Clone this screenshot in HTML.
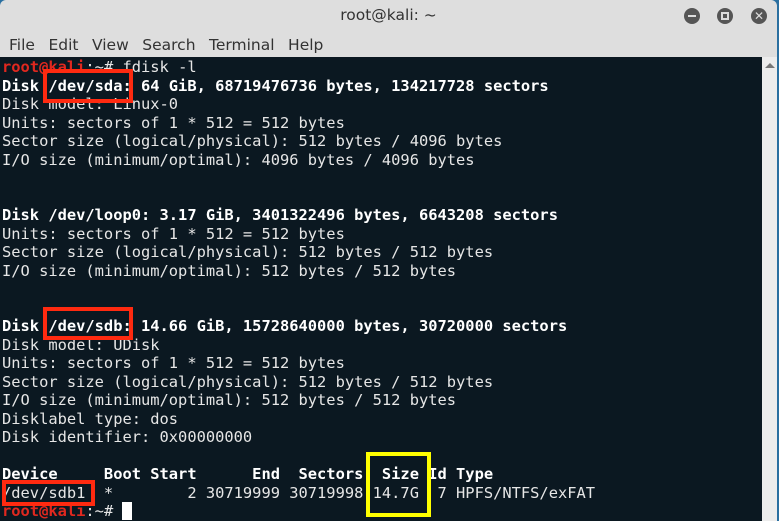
<!DOCTYPE html>
<html><head><meta charset="utf-8"><style>
*{margin:0;padding:0;box-sizing:border-box}
body{width:779px;height:521px;overflow:hidden;background:#2a6fa0;position:relative;font-family:"DejaVu Sans","Liberation Sans",sans-serif}
.win{position:absolute;left:0;top:0;width:777px;height:521px;background:#dedede;border-radius:6px 6px 0 0}
.title{position:absolute;top:6px;left:0;width:777px;text-align:center;font-size:15.5px;color:#333}
.menu{position:absolute;top:36px;left:9px;font-size:15.5px;color:#333}
.menu span{margin-right:13.5px}
.btn{position:absolute;top:8px;width:16px;height:16px;border-radius:50%;background:#555}
.term{position:absolute;left:0;top:57px;width:762px;height:464px;background:#0b1821;overflow:hidden}
.sb{position:absolute;left:762px;top:57px;width:15px;height:464px;background:#ececec}
pre{position:absolute;left:2px;top:1px;font-family:"DejaVu Sans Mono",monospace;font-size:15.4px;line-height:18.5px;color:#e6e6e6}
b{font-weight:bold;color:#fff}
.r{color:#e0281f;font-weight:bold}
.box{position:absolute;border:4px solid #ff2a10}
.y{position:absolute;border:4px solid #ffff00}
</style></head><body>
<div class="win">
<div class="title">root@kali: ~</div>
<div class="btn" style="left:684px"><div style="position:absolute;left:4px;top:7px;width:8px;height:2px;background:#ddd"></div></div>
<div class="btn" style="left:717px"><div style="position:absolute;left:4px;top:4px;width:8px;height:8px;border:2px solid #ddd"></div></div>
<div class="btn" style="left:751px;color:#ddd;font-size:12px;line-height:16px;text-align:center;font-weight:bold">✕</div>
<div class="menu"><span>File</span><span>Edit</span><span>View</span><span>Search</span><span>Terminal</span><span>Help</span></div>
</div>
<div class="term"><pre><span class="r">root@kali</span>:~# fdisk -l
<b>Disk /dev/sda: 64 GiB, 68719476736 bytes, 134217728 sectors</b>
Disk model: Linux-0
Units: sectors of 1 * 512 = 512 bytes
Sector size (logical/physical): 512 bytes / 4096 bytes
I/O size (minimum/optimal): 4096 bytes / 4096 bytes


<b>Disk /dev/loop0: 3.17 GiB, 3401322496 bytes, 6643208 sectors</b>
Units: sectors of 1 * 512 = 512 bytes
Sector size (logical/physical): 512 bytes / 512 bytes
I/O size (minimum/optimal): 512 bytes / 512 bytes


<b>Disk /dev/sdb: 14.66 GiB, 15728640000 bytes, 30720000 sectors</b>
Disk model: UDisk
Units: sectors of 1 * 512 = 512 bytes
Sector size (logical/physical): 512 bytes / 512 bytes
I/O size (minimum/optimal): 512 bytes / 512 bytes
Disklabel type: dos
Disk identifier: 0x00000000

<b>Device     Boot Start      End  Sectors  Size Id Type</b>
/dev/sdb1  *        2 30719999 30719998 14.7G  7 HPFS/NTFS/exFAT
<span class="r">root@kali</span>:~# <span style="background:#fff"> </span></pre></div>
<div class="sb"><div style="position:absolute;left:3px;top:6px;border:5px solid transparent;border-bottom:5px solid #777;border-top:0"></div></div>
<div class="box" style="left:43px;top:69px;width:90px;height:34px"></div>
<div class="box" style="left:43px;top:307px;width:90px;height:33px"></div>
<div class="box" style="left:2px;top:480px;width:93px;height:26px"></div>
<div class="y" style="left:366px;top:452px;width:65px;height:65px"></div>
</body></html>
